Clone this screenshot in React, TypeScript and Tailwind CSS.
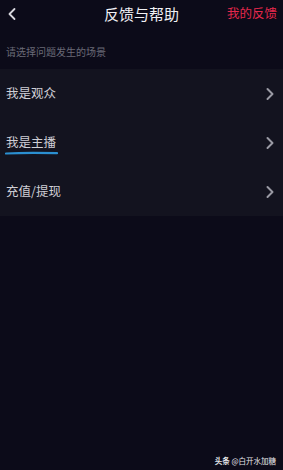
import { ChevronLeft, ChevronRight } from 'lucide-react';

const ROWS = ['我是观众', '我是主播', '充值/提现'];

export default function App() {
  return (
    <div
      className="relative flex h-[470px] w-[283px] flex-col bg-[#0c0b19] text-white"
      style={{ fontFamily: '"Noto Sans CJK SC", "Noto Sans", sans-serif' }}
    >
      {/* Header */}
      <div className="relative flex h-[28px] items-start justify-center pt-[6px]">
        <ChevronLeft className="absolute left-[2px] top-[4px] text-[#d8d8de]" size={20} strokeWidth={2.2} />
        <span className="text-[15px] leading-none text-[#f0f0f4]">反馈与帮助</span>
        <span className="absolute right-[6px] top-[7px] text-[12.5px] leading-none text-[#e5284c]">我的反馈</span>
      </div>

      {/* Subtitle */}
      <div className="px-[6px] pt-[19px] text-[10px] leading-none text-[#6a6a77]">请选择问题发生的场景</div>

      {/* List */}
      <div className="mt-[12px] flex flex-col bg-[#13131f]">
        {ROWS.map((label, i) => (
          <div key={label} className="flex h-[49px] items-center justify-between pl-[6px] pr-[3px]">
            <span className="relative -mt-[1px] text-[12.5px] leading-none text-[#cfcfd6]">
              {label}
              {i === 1 && (
                <svg className="absolute left-[-1px] top-[14px]" width="54" height="6" viewBox="0 0 54 6">
                  <path d="M1 3.5 C 14 2.8, 30 2.6, 52 3.2" stroke="#2b8fd0" strokeWidth="2.2" fill="none" strokeLinecap="round" />
                </svg>
              )}
            </span>
            <ChevronRight className="text-[#9a9aa4]" size={20} strokeWidth={2.4} />
          </div>
        ))}
      </div>

      {/* Watermark */}
      <div className="absolute bottom-[6px] right-[7px] text-[7.5px] leading-none text-[#e6e6ea]">
        <span className="font-bold">头条</span> @白开水加糖
      </div>
    </div>
  );
}
